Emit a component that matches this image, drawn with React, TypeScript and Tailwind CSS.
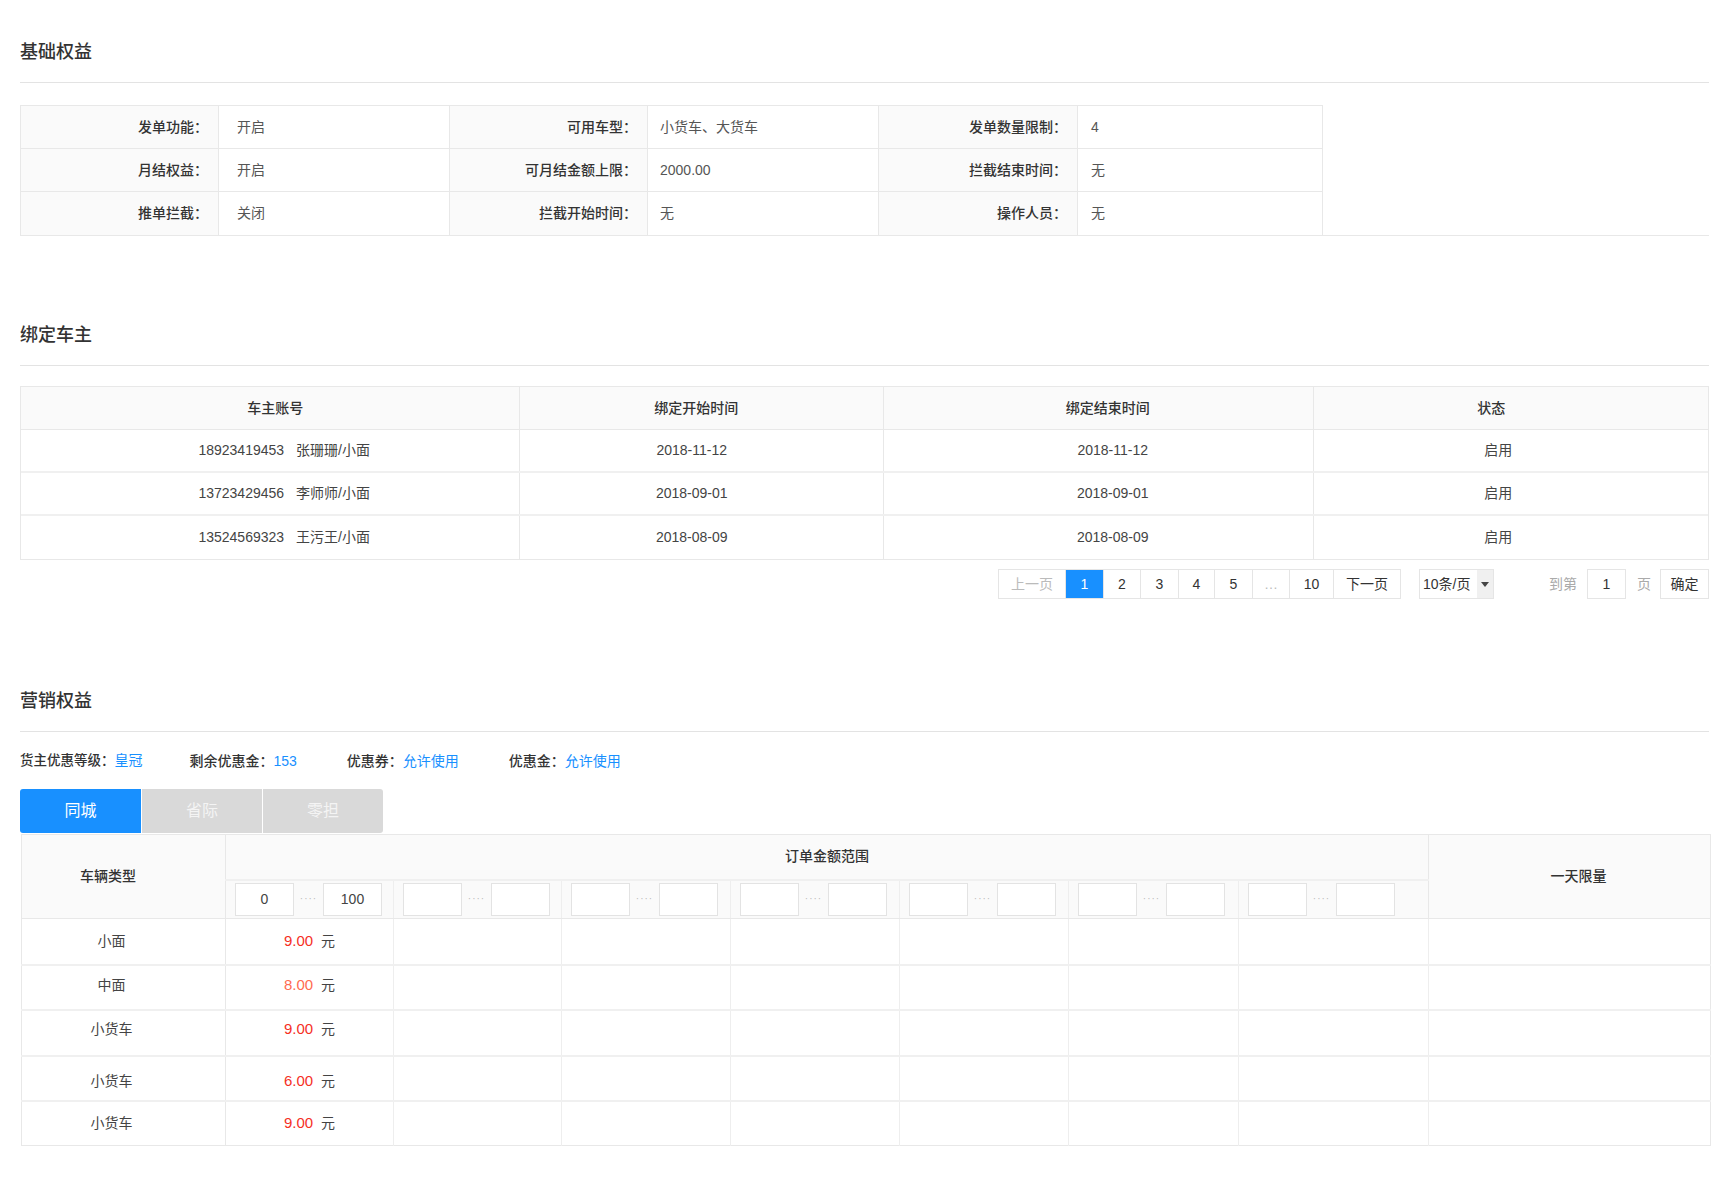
import type { ReactNode } from "react";

const FONT = "font-['Liberation_Sans','Noto_Sans_CJK_SC',sans-serif]";

const basicRows = [
  [
    ["发单功能：", "开启"],
    ["可用车型：", "小货车、大货车"],
    ["发单数量限制：", "4"],
  ],
  [
    ["月结权益：", "开启"],
    ["可月结金额上限：", "2000.00"],
    ["拦截结束时间：", "无"],
  ],
  [
    ["推单拦截：", "关闭"],
    ["拦截开始时间：", "无"],
    ["操作人员：", "无"],
  ],
];

const owners = [
  ["18923419453", "张珊珊/小面", "2018-11-12", "2018-11-12", "启用"],
  ["13723429456", "李师师/小面", "2018-09-01", "2018-09-01", "启用"],
  ["13524569323", "王污王/小面", "2018-08-09", "2018-08-09", "启用"],
];

// row text isn't perfectly centred in the design, so each row carries its own nudge
const vehicles = [
  { name: "小面", price: "9.00", tone: "text-[#f5301f]", h: "h-[46px]", nudge: "" },
  { name: "中面", price: "8.00", tone: "text-[#ff6b50]", h: "h-[45px]", nudge: "pb-1" },
  { name: "小货车", price: "9.00", tone: "text-[#f5301f]", h: "h-[46px]", nudge: "pb-[6px]" },
  { name: "小货车", price: "6.00", tone: "text-[#f5301f]", h: "h-[45px]", nudge: "pt-[6px]" },
  { name: "小货车", price: "9.00", tone: "text-[#f5301f]", h: "h-[45px]", nudge: "" },
];

const rangeCols = [168, 168, 169, 169, 169, 170, 190];

function SectionTitle({ children }: { children: ReactNode }) {
  return (
    <>
      <h2 className="h-6 text-[18px] leading-6 font-medium text-[#333]">{children}</h2>
      <div className="mt-[18px] h-px bg-[#e3e3e3]" />
    </>
  );
}

function BasicTable() {
  const labelW = ["w-[198px]", "w-[198px]", "w-[199px]"];
  const valueW = ["w-[231px] pl-[18px]", "w-[231px] pl-3", "w-[246px] pl-[13px]"];
  return (
    <div className="mt-[22px] border-b border-[#e8e8e8]">
      <div className="w-[1303px] border-x border-t border-[#e8e8e8]">
        {basicRows.map((row, r) => (
          <div key={r} className={`flex h-[43px] ${r < 2 ? "border-b border-[#e8e8e8]" : ""}`}>
            {row.map(([label, value], c) => (
              <div key={c} className="flex">
                <div
                  className={`${labelW[c]} flex items-center justify-end border-r border-[#e8e8e8] bg-[#fafafa] pr-[10px] text-[14px] font-medium text-[#333]`}
                >
                  {label}
                </div>
                <div
                  className={`${valueW[c]} flex items-center text-[14px] text-[#555] ${c < 2 ? "border-r border-[#e8e8e8]" : ""}`}
                >
                  {value}
                </div>
              </div>
            ))}
          </div>
        ))}
      </div>
    </div>
  );
}

function OwnerTable() {
  const widths = ["w-[500px]", "w-[364px]", "w-[431px]", "w-[394px]"];
  const heads = ["车主账号", "绑定开始时间", "绑定结束时间", "状态"];
  const headPad = ["pl-[10px]", "pr-[11px]", "pl-[18px]", "pr-10"];
  return (
    <div className="mt-5 border border-[#e8e8e8]">
      <div className="flex h-[43px] border-b border-[#e8e8e8] bg-[#fafafa]">
        {heads.map((h, i) => (
          <div
            key={h}
            className={`${widths[i]} ${headPad[i]} flex items-center justify-center text-[14px] font-medium text-[#333] ${i < 3 ? "border-r border-[#e8e8e8]" : ""}`}
          >
            {h}
          </div>
        ))}
      </div>
      {owners.map((o, r) => (
        <div key={r} className={`flex h-[43px] ${r < 2 ? "border-b-2 border-[#f0f0f0]" : ""}`}>
          <div className={`${widths[0]} flex items-center justify-center border-r border-[#e8e8e8] pl-[28px] text-[14px] text-[#444]`}>
            <span>{o[0]}</span>
            <span className="ml-3">{o[1]}</span>
          </div>
          <div className={`${widths[1]} flex items-center justify-center border-r border-[#e8e8e8] pr-5 text-[14px] text-[#444]`}>
            {o[2]}
          </div>
          <div className={`${widths[2]} flex items-center justify-center border-r border-[#e8e8e8] pl-7 text-[14px] text-[#444]`}>
            {o[3]}
          </div>
          <div className={`${widths[3]} flex items-center justify-center pr-[26px] text-[14px] text-[#444]`}>{o[4]}</div>
        </div>
      ))}
    </div>
  );
}

function Pagination() {
  const pages = [
    { t: "上一页", w: "w-[67px]", cls: "text-[#bbb]" },
    { t: "1", w: "w-[38px]", cls: "bg-[#1890ff] text-white border-[#1890ff]" },
    { t: "2", w: "w-[37px]", cls: "text-[#333]" },
    { t: "3", w: "w-[38px]", cls: "text-[#333]" },
    { t: "4", w: "w-[36px]", cls: "text-[#333]" },
    { t: "5", w: "w-[38px]", cls: "text-[#333]" },
    { t: "…", w: "w-[37px]", cls: "text-[#bbb]" },
    { t: "10", w: "w-[44px]", cls: "text-[#333]" },
    { t: "下一页", w: "w-[67px]", cls: "text-[#333]" },
  ];
  return (
    <div className="mt-[9px] flex h-[30px] items-center justify-end text-[14px]">
      <div className="flex h-[30px] border-l border-[#e5e5e5]">
        {pages.map((p, i) => (
          <div
            key={i}
            className={`${p.w} flex items-center justify-center border-y border-r border-[#e5e5e5] ${p.cls}`}
          >
            {p.t}
          </div>
        ))}
      </div>
      <div className="ml-[18px] flex h-[30px] w-[75px] border border-[#e5e5e5] text-[#333]">
        <div className="flex flex-1 items-center pl-[3px]">10条/页</div>
        <div className="flex w-4 items-center justify-center bg-[#f0f0f0]">
          <svg width="8" height="5" viewBox="0 0 8 5">
            <path d="M0 0h8L4 5z" fill="#444" />
          </svg>
        </div>
      </div>
      <span className="ml-[55px] text-[#aaa]">到第</span>
      <div className="ml-[10px] flex h-[30px] w-[39px] items-center justify-center border border-[#e5e5e5] text-[#333]">
        1
      </div>
      <span className="ml-[11px] text-[#aaa]">页</span>
      <div className="ml-[9px] flex h-[30px] w-[49px] items-center justify-center border border-[#e5e5e5] text-[#333]">
        确定
      </div>
    </div>
  );
}

function Info({ label, value, className }: { label: string; value: string; className: string }) {
  return (
    <span className={className}>
      <span className="font-medium text-[#333]">{label}</span>
      <span className="text-[14px] text-[#1890ff]">{value}</span>
    </span>
  );
}

function Box({ value }: { value?: string }) {
  return (
    <div className="flex h-[33px] w-[59px] items-center justify-center border border-[#e3e3e3] bg-white text-[14px] text-[#444]">
      {value}
    </div>
  );
}

function PriceTable() {
  return (
    <table className="ml-px mt-px w-[1689px] table-fixed border-collapse text-[14px]">
      <colgroup>
        <col style={{ width: 204 }} />
        {rangeCols.map((w, i) => (
          <col key={i} style={{ width: w }} />
        ))}
        <col style={{ width: 282 }} />
      </colgroup>
      <thead className="bg-[#fafafa]">
        <tr className="h-[45px]">
          <th
            rowSpan={2}
            className="border border-[#e8e8e8] pr-[31px] text-center font-medium text-[#333]"
          >
            车辆类型
          </th>
          <th colSpan={7} className="border-x border-t border-b-2 border-[#e8e8e8] border-b-[#f0f0f0] text-center font-medium text-[#333]">
            订单金额范围
          </th>
          <th rowSpan={2} className="border border-[#e8e8e8] pl-[18px] text-center font-medium text-[#333]">
            一天限量
          </th>
        </tr>
        <tr className="h-[39px]">
          {rangeCols.map((_, i) => (
            <th key={i} className="border-b border-r border-[#e8e8e8] border-r-[#eeeeee] p-0 font-normal">
              <div className="flex items-center pl-[9px]">
                <Box value={i === 0 ? "0" : undefined} />
                <span className="w-[29px] text-center text-[10px] leading-none tracking-[1px] text-[#bbb]">····</span>
                <Box value={i === 0 ? "100" : undefined} />
              </div>
            </th>
          ))}
        </tr>
      </thead>
      <tbody>
        {vehicles.map((v, r) => (
          <tr key={r} className={`${v.h} ${r < vehicles.length - 1 ? "border-b-2 border-[#f0f0f0]" : "border-b border-[#e8e8e8]"}`}>
            <td className={`border-x border-[#e8e8e8] pr-6 text-center text-[#444] ${v.nudge}`}>{v.name}</td>
            <td className={`border-r border-[#eeeeee] text-center ${v.nudge}`}>
              <span className={`${v.tone} text-[15px]`}>{v.price}</span>
              <span className="ml-2 text-[#444]">元</span>
            </td>
            {rangeCols.slice(1).map((_, i) => (
              <td key={i} className="border-r border-[#eeeeee]" />
            ))}
            <td className="border-r border-[#e8e8e8]" />
          </tr>
        ))}
      </tbody>
    </table>
  );
}

export default function App() {
  return (
    <div className={`${FONT} min-h-[1187px] bg-white pl-5 pt-10 text-[#333]`}>
      <div className="w-[1689px]">
        <section>
          <SectionTitle>基础权益</SectionTitle>
          <BasicTable />
        </section>

        <section className="mt-[87px]">
          <SectionTitle>绑定车主</SectionTitle>
          <OwnerTable />
          <Pagination />
        </section>

        <section className="mt-[90px]">
          <SectionTitle>营销权益</SectionTitle>
          <div className="mt-[19px] flex h-5 items-center">
            <Info className="mr-[47px] text-[13.5px]" label="货主优惠等级：" value="皇冠" />
            <Info className="mr-[50px] text-[14px]" label="剩余优惠金：" value="153" />
            <Info className="mr-[50px] text-[14px]" label="优惠券：" value="允许使用" />
            <Info className="text-[14px]" label="优惠金：" value="允许使用" />
          </div>
          <div className="mt-[18px] flex h-[44px] text-[16px]">
            <div className="flex w-[121px] items-center justify-center rounded-l-[3px] bg-[#1890ff] text-white">同城</div>
            <div className="ml-px flex w-[120px] items-center justify-center bg-[#d9d9d9] text-[#f4f4f4]">省际</div>
            <div className="ml-px flex w-[120px] items-center justify-center rounded-r-[3px] bg-[#d9d9d9] text-[#f4f4f4]">零担</div>
          </div>
          <PriceTable />
        </section>
      </div>
    </div>
  );
}
